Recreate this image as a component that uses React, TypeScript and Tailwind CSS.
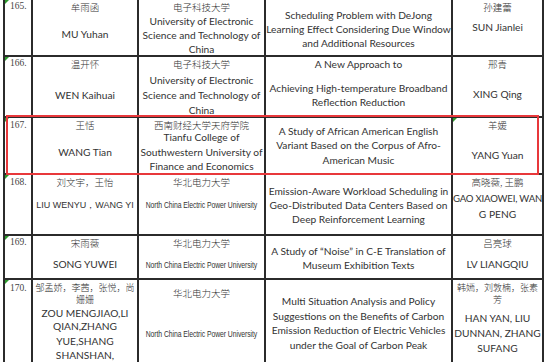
import React from 'react';

const EN = "font-['Lato',sans-serif] text-[10.2px] text-[#333]";
const ENS = "font-['Lato',sans-serif] text-[9.6px] tracking-[-0.02em] text-[#333]";
const SN = "font-['Liberation_Sans',sans-serif] text-[9px] text-[#333]";
const ZH = "font-['Noto_Sans_CJK_SC',sans-serif] text-[9.5px] font-light text-[#333]";
const ZHS = "font-['Noto_Sans_CJK_SC',sans-serif] text-[9px] font-light text-[#333]";
const NC = "font-['Liberation_Sans',sans-serif] text-[9.5px] text-[#333] inline-block scale-x-[0.72] tracking-[-0.01em]";
const NUM = "font-['Liberation_Serif',serif] text-[9.5px] text-[#444] h-[12px] leading-[12px]";

const ROW = 'relative grid grid-cols-[28px_106px_127px_187px_91px] border-b-2 border-[#2b2b2b]';
const CELL = 'relative flex flex-col items-center overflow-hidden border-r-2 border-[#2b2b2b]';

type F = 'en' | 'ens' | 'sn' | 'zh' | 'zhs' | 'nc';
const FONTS: Record<Exclude<F, 'nc'>, string> = { en: EN, ens: ENS, sn: SN, zh: ZH, zhs: ZHS };

function L({ c = '', f = 'en', children }: { c?: string; f?: F; children: React.ReactNode }) {
  if (f === 'nc') {
    return (
      <div className={`h-[14px] leading-[14px] whitespace-nowrap flex justify-center ${c}`}>
        <span className={NC}>{children}</span>
      </div>
    );
  }
  return <div className={`h-[14px] leading-[14px] whitespace-nowrap ${FONTS[f]} ${c}`}>{children}</div>;
}

// little green excel marker
function Mark() {
  return (
    <span className="absolute left-0 top-0 w-0 h-0 border-t-[4px] border-t-[#2e9a2e] border-r-[4px] border-r-transparent" />
  );
}

function Num({ n, c = '' }: { n: string; c?: string }) {
  return (
    <div className={`${CELL} items-start pl-[5px] ${c}`}>
      <Mark />
      <div className={NUM}>{n}</div>
    </div>
  );
}

export default function App() {
  return (
    <div className="w-[548px] h-[362px] overflow-hidden bg-white">
      <div className="ml-[3px] w-[541px] border-l-2 border-[#2b2b2b]">
        {/* 165 */}
        <div className={`${ROW} h-[57px]`}>
          <Num n="165." />
          <div className={CELL}>
            <L f="zh">牟雨函</L>
            <L c="mt-[13px]">MU Yuhan</L>
          </div>
          <div className={CELL}>
            <L f="zh">电子科技大学</L>
            <L>University of Electronic</L>
            <L>Science and Technology of</L>
            <L>China</L>
          </div>
          <div className={`${CELL} pt-[8px]`}>
            <L>Scheduling Problem with DeJong</L>
            <L>Learning Effect Considering Due Window</L>
            <L>and Additional Resources</L>
          </div>
          <div className={CELL}>
            <L f="zh">孙建蕾</L>
            <L c="mt-[6px]">SUN Jianlei</L>
          </div>
        </div>

        {/* 166 */}
        <div className={`${ROW} h-[61px]`}>
          <Num n="166." />
          <div className={CELL}>
            <L f="zh">温开怀</L>
            <L c="mt-[17px]">WEN Kaihuai</L>
          </div>
          <div className={CELL}>
            <L f="zh">电子科技大学</L>
            <L c="mt-[2px]">University of Electronic</L>
            <L c="mt-[1px]">Science and Technology of</L>
            <L c="mt-[1px]">China</L>
          </div>
          <div className={CELL}>
            <L>A New Approach to</L>
            <L c="mt-[10px]">Achieving High-temperature Broadband</L>
            <L>Reflection Reduction</L>
          </div>
          <div className={CELL}>
            <L f="zh">邢青</L>
            <L c="mt-[16px]">XING Qing</L>
          </div>
        </div>

        {/* 167 */}
        <div className={`${ROW} h-[57px]`}>
          <Num n="167." c="pt-[1px]" />
          <div className={CELL}>
            <L f="zh">王恬</L>
            <L c="mt-[13px]">WANG Tian</L>
          </div>
          <div className={CELL}>
            <L f="zh">西南财经大学天府学院</L>
            <L c="-mt-[2px]">Tianfu College of</L>
            <L c="mt-[1px]">Southwestern University of</L>
            <L>Finance and Economics</L>
          </div>
          <div className={`${CELL} pt-[6px]`}>
            <L>A Study of African American English</L>
            <L>Variant Based on the Corpus of Afro-</L>
            <L c="mt-[1px]">American Music</L>
          </div>
          <div className={CELL}>
            <Mark />
            <L f="zh">羊媛</L>
            <L c="mt-[16px]">YANG Yuan</L>
          </div>
          <div className="absolute left-[1px] -top-[3px] w-[533px] h-[60px] border-2 border-[#e8383b] z-10 pointer-events-none" />
        </div>

        {/* 168 */}
        <div className={`${ROW} h-[61px]`}>
          <Num n="168." c="pt-[1px]" />
          <div className={CELL}>
            <L f="zh">刘文宇，王怡</L>
            <L f="sn" c="mt-[9px]">LIU WENYU，WANG YI</L>
          </div>
          <div className={CELL}>
            <L f="zh">华北电力大学</L>
            <L f="nc" c="mt-[9px]">North China Electric Power University</L>
          </div>
          <div className={`${CELL} pt-[9px]`}>
            <L>Emission-Aware Workload Scheduling in</L>
            <L>Geo-Distributed Data Centers Based on</L>
            <L>Deep Reinforcement Learning</L>
          </div>
          <div className={CELL}>
            <L f="zh" c="h-[10px] leading-[10px]">高晓薇, 王鹏</L>
            <L f="ens" c="mt-[3px]">GAO XIAOWEI, WAN</L>
            <L c="mt-[1px]">G PENG</L>
          </div>
        </div>

        {/* 169 */}
        <div className={`${ROW} h-[44px]`}>
          <Num n="169." />
          <div className={CELL}>
            <L f="zh">宋雨薇</L>
            <L c="mt-[7px]">SONG YUWEI</L>
          </div>
          <div className={CELL}>
            <L f="zh">华北电力大学</L>
            <L f="nc" c="mt-[8px]">North China Electric Power University</L>
          </div>
          <div className={`${CELL} pt-[8px]`}>
            <L>A Study of “Noise” in C-E Translation of</L>
            <L>Museum Exhibition Texts</L>
          </div>
          <div className={CELL}>
            <L f="zh">吕亮球</L>
            <L c="mt-[7px]">LV LIANGQIU</L>
          </div>
        </div>

        {/* 170 */}
        <div className={`${ROW} h-[100px]`}>
          <Num n="170." c="pt-[2px]" />
          <div className={`${CELL} pt-[1px]`}>
            <L f="zhs">邹孟娇，李茜，张悦，尚</L>
            <L f="zhs" c="-mt-[2px]">姗姗</L>
            <L c="-mt-[1px]">ZOU MENGJIAO,LI</L>
            <L c="-mt-[1px]">QIAN,ZHANG</L>
            <L c="mt-[1px]">YUE,SHANG</L>
            <L>SHANSHAN,</L>
          </div>
          <div className={`${CELL} pt-[6px]`}>
            <L f="zh">华北电力大学</L>
            <L f="nc" c="mt-[27px]">North China Electric Power University</L>
          </div>
          <div className={`${CELL} pt-[14px]`}>
            <L>Multi Situation Analysis and Policy</L>
            <L c="mt-[1px]">Suggestions on the Benefits of Carbon</L>
            <L>Emission Reduction of Electric Vehicles</L>
            <L c="mt-[1px]">under the Goal of Carbon Peak</L>
          </div>
          <div className={`${CELL} pt-[1px]`}>
            <L f="zhs">韩嫣，刘敦楠，张素</L>
            <L f="zhs" c="-mt-[2px]">芳</L>
            <L c="mt-[4px]">HAN YAN, LIU</L>
            <L c="mt-[1px]">DUNNAN, ZHANG</L>
            <L c="mt-[1px]">SUFANG</L>
          </div>
        </div>
      </div>
    </div>
  );
}
